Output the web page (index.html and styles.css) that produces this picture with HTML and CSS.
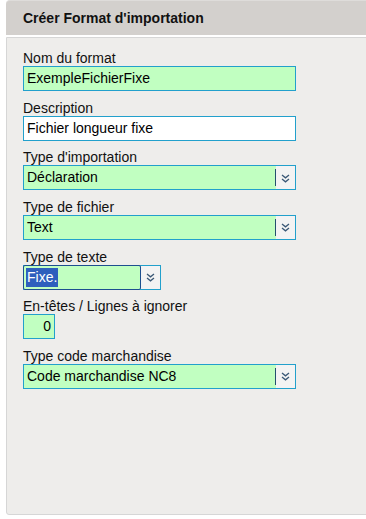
FILE: index.html
```html
<!DOCTYPE html>
<html lang="fr">
<head>
<meta charset="utf-8">
<title>Créer Format d'importation</title>
<link rel="stylesheet" href="styles.css">
</head>
<body>
<div class="header">Créer Format d'importation</div>
<div class="panel">
  <div class="field">
    <div class="label">Nom du format</div>
    <div class="input wide green">ExempleFichierFixe</div>
  </div>
  <div class="field">
    <div class="label">Description</div>
    <div class="input wide white">Fichier longueur fixe</div>
  </div>
  <div class="field">
    <div class="label">Type d'importation</div>
    <div class="select wide">
      <div class="value">Déclaration</div>
      <div class="arrow"><svg width="9" height="9" viewBox="0 0 9 9"><polyline points="1,1 4.5,3.8 8,1"/><polyline points="1,5 4.5,7.8 8,5"/></svg></div>
    </div>
  </div>
  <div class="field">
    <div class="label">Type de fichier</div>
    <div class="select wide">
      <div class="value">Text</div>
      <div class="arrow"><svg width="9" height="9" viewBox="0 0 9 9"><polyline points="1,1 4.5,3.8 8,1"/><polyline points="1,5 4.5,7.8 8,5"/></svg></div>
    </div>
  </div>
  <div class="field">
    <div class="label">Type de texte</div>
    <div class="select small focused">
      <div class="value"><span class="sel">Fixe.</span></div>
      <div class="arrow"><svg width="9" height="9" viewBox="0 0 9 9"><polyline points="1,1 4.5,3.8 8,1"/><polyline points="1,5 4.5,7.8 8,5"/></svg></div>
    </div>
  </div>
  <div class="field">
    <div class="label">En-têtes / Lignes à ignorer</div>
    <div class="input num green">0</div>
  </div>
  <div class="field">
    <div class="label">Type code marchandise</div>
    <div class="select wide">
      <div class="value">Code marchandise NC8</div>
      <div class="arrow"><svg width="9" height="9" viewBox="0 0 9 9"><polyline points="1,1 4.5,3.8 8,1"/><polyline points="1,5 4.5,7.8 8,5"/></svg></div>
    </div>
  </div>
</div>
</body>
</html>
```

FILE: styles.css
```css
html, body {
  margin: 0;
  padding: 0;
  background: #ffffff;
  overflow: hidden;
}
body {
  font-family: "Liberation Sans", Arial, sans-serif;
  font-size: 14px;
  color: #000;
  width: 366px;
  height: 519px;
}
.header {
  margin-left: 6px;
  width: 372px;
  height: 35px;
  box-sizing: border-box;
  background: #d3d0cd;
  border-top: 1px solid #dedcda;
  border-top-left-radius: 4px;
  padding-left: 17px;
  font-weight: bold;
  font-size: 14px;
  line-height: 34px;
  color: #111;
}
.panel {
  margin-top: 2px;
  margin-left: 6px;
  width: 372px;
  height: 478px;
  box-sizing: border-box;
  background: #eeedeb;
  border: 1px solid #d6d6d6;
  border-bottom-left-radius: 3px;
  padding: 12px 0 0 16px;
}
.field {
  margin-bottom: 8.67px;
}
.label {
  height: 16px;
  line-height: 16px;
  white-space: nowrap;
  color: #111;
}
.input {
  height: 25px;
  box-sizing: border-box;
  border: 1px solid #22a0cc;
  line-height: 23px;
  padding: 0 3px;
  white-space: nowrap;
}
.green { background: #c1ffc1; }
.white { background: #ffffff; }
.wide { width: 273px; }
.num {
  width: 32px;
  text-align: right;
}
.select {
  height: 25px;
  box-sizing: border-box;
  border: 1px solid #22a0cc;
  display: flex;
  background: #f3f3f3;
}
.select.small { width: 138px; }
.value {
  flex: 1;
  background: #c1ffc1;
  padding-left: 3px;
  line-height: 23px;
  white-space: nowrap;
  position: relative;
}
.select.wide .value::after {
  content: "";
  position: absolute;
  right: 0;
  top: 3px;
  bottom: 3px;
  width: 1px;
  background: #24506e;
}
.select.focused .value {
  margin: -1px 0 -1px -1px;
  border: 1px solid #1d4f8f;
  border-radius: 2px;
  padding-left: 3px;
  line-height: 23px;
}
.sel {
  background: #2e5fbd;
  color: #fff;
  padding: 1px 1px 2px 1px;
  margin-left: -1px;
}
.arrow {
  width: 19px;
  display: flex;
  align-items: center;
  justify-content: center;
  padding-top: 1px;
}
.arrow svg polyline {
  fill: none;
  stroke: #3a5876;
  stroke-width: 1.3;
}
```
